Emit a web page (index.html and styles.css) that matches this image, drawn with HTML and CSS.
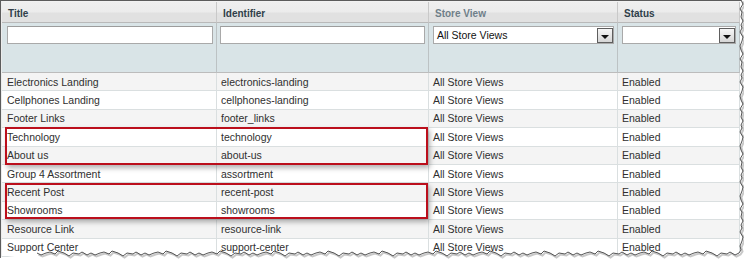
FILE: index.html
```html
<!DOCTYPE html>
<html>
<head>
<meta charset="utf-8">
<link rel="stylesheet" href="styles.css">
</head>
<body>
<div class="frame">
  <table class="grid">
    <colgroup>
      <col class="c1"><col class="c2"><col class="c3"><col class="c4">
    </colgroup>
    <thead>
      <tr class="headings">
        <th class="first"><span class="sort">Title</span></th>
        <th><span class="sort">Identifier</span></th>
        <th><span class="nosort">Store View</span></th>
        <th><span class="sort">Status</span></th>
      </tr>
      <tr class="filter">
        <th class="first"><input class="txt" type="text"></th>
        <th><input class="txt" type="text"></th>
        <th><div class="sel"><span class="val">All Store Views</span><span class="btn"><i></i></span></div></th>
        <th><div class="sel"><span class="val"></span><span class="btn"><i></i></span></div></th>
      </tr>
    </thead>
    <tbody>
      <tr class="odd"><td class="first">Electronics Landing</td><td>electronics-landing</td><td>All Store Views</td><td>Enabled</td></tr>
      <tr><td class="first">Cellphones Landing</td><td>cellphones-landing</td><td>All Store Views</td><td>Enabled</td></tr>
      <tr class="odd"><td class="first">Footer Links</td><td>footer_links</td><td>All Store Views</td><td>Enabled</td></tr>
      <tr><td class="first">Technology</td><td>technology</td><td>All Store Views</td><td>Enabled</td></tr>
      <tr class="odd"><td class="first">About us</td><td>about-us</td><td>All Store Views</td><td>Enabled</td></tr>
      <tr><td class="first">Group 4 Assortment</td><td>assortment</td><td>All Store Views</td><td>Enabled</td></tr>
      <tr class="odd"><td class="first">Recent Post</td><td>recent-post</td><td>All Store Views</td><td>Enabled</td></tr>
      <tr><td class="first">Showrooms</td><td>showrooms</td><td>All Store Views</td><td>Enabled</td></tr>
      <tr class="odd"><td class="first">Resource Link</td><td>resource-link</td><td>All Store Views</td><td>Enabled</td></tr>
      <tr><td class="first">Support Center</td><td>support-center</td><td>All Store Views</td><td>Enabled</td></tr>
    </tbody>
  </table>
  <div class="mark mark1"></div>
  <div class="mark mark2"></div>
</div>
<svg class="torn" width="744" height="262" viewBox="0 0 744 262">
  <path class="paper" d="M741 0 l2 4 -3 5 2 3 -1 5 2 4 -2 4 l1 3 -2 4 3 5 -1 4 -2 5 1 4 l2 4 -3 5 2 3 -1 5 2 4 -2 4 l1 3 -2 4 3 5 -1 4 -2 5 1 4 l2 4 -3 5 2 3 -1 5 2 4 -2 4 l1 3 -2 4 3 5 -1 4 -2 5 1 4 l2 4 -3 5 2 3 -1 5 2 4 -2 4 l1 3 -2 4 3 5 -1 4 -2 5 1 4 l2 4 -3 5 2 3 -1 5 2 4 -2 4 l1 3 -2 4 3 5 -1 4 -2 5 1 4 l-2 3 l-4 2 -5 -3 -3 2 -6 -1 -4 3 -5 -3 l-6 -2 -3 3 -5 -2 -4 1 -5 2 -4 -2 l-4 2 -5 -3 -3 2 -6 -1 -4 3 -5 -3 l-6 -2 -3 3 -5 -2 -4 1 -5 2 -4 -2 l-4 2 -5 -3 -3 2 -6 -1 -4 3 -5 -3 l-6 -2 -3 3 -5 -2 -4 1 -5 2 -4 -2 l-4 2 -5 -3 -3 2 -6 -1 -4 3 -5 -3 l-6 -2 -3 3 -5 -2 -4 1 -5 2 -4 -2 l-4 2 -5 -3 -3 2 -6 -1 -4 3 -5 -3 l-6 -2 -3 3 -5 -2 -4 1 -5 2 -4 -2 l-4 2 -5 -3 -3 2 -6 -1 -4 3 -5 -3 l-6 -2 -3 3 -5 -2 -4 1 -5 2 -4 -2 l-4 2 -5 -3 -3 2 -6 -1 -4 3 -5 -3 l-6 -2 -3 3 -5 -2 -4 1 -5 2 -4 -2 l-4 2 -5 -3 -3 2 -6 -1 -4 3 -5 -3 l-6 -2 -3 3 -5 -2 -4 1 -5 2 -4 -2 l-4 2 -5 -3 -3 2 -6 -1 -4 3 -5 -3 l-6 -2 -3 3 -5 -2 -4 1 -5 2 -4 -2 l-4 2 -5 -3 -3 2 -6 -1 -4 3 -5 -3 l-6 -2 -3 3 -5 -2 -4 1 -5 2 -4 -2 l-4 2 -5 -3 -3 2 -6 -1 -4 3 -5 -3 l-6 -2 -3 3 -5 -2 -4 1 -5 2 -4 -2 l-4 2 -5 -3 -3 2 -6 -1 -4 3 -5 -3 l-6 -2 -3 3 -5 -2 -4 1 -5 2 -4 -2 l-4 2 -5 -3 -3 2 -6 -1 -4 3 -5 -3 l-6 -2 -3 3 -5 -2 -4 1 -5 2 -4 -2 L-30 262 L744 262 L744 0 Z"/>
  <path class="edge-shadow" d="M741 0 l2 4 -3 5 2 3 -1 5 2 4 -2 4 l1 3 -2 4 3 5 -1 4 -2 5 1 4 l2 4 -3 5 2 3 -1 5 2 4 -2 4 l1 3 -2 4 3 5 -1 4 -2 5 1 4 l2 4 -3 5 2 3 -1 5 2 4 -2 4 l1 3 -2 4 3 5 -1 4 -2 5 1 4 l2 4 -3 5 2 3 -1 5 2 4 -2 4 l1 3 -2 4 3 5 -1 4 -2 5 1 4 l2 4 -3 5 2 3 -1 5 2 4 -2 4 l1 3 -2 4 3 5 -1 4 -2 5 1 4 l-2 3 l-4 2 -5 -3 -3 2 -6 -1 -4 3 -5 -3 l-6 -2 -3 3 -5 -2 -4 1 -5 2 -4 -2 l-4 2 -5 -3 -3 2 -6 -1 -4 3 -5 -3 l-6 -2 -3 3 -5 -2 -4 1 -5 2 -4 -2 l-4 2 -5 -3 -3 2 -6 -1 -4 3 -5 -3 l-6 -2 -3 3 -5 -2 -4 1 -5 2 -4 -2 l-4 2 -5 -3 -3 2 -6 -1 -4 3 -5 -3 l-6 -2 -3 3 -5 -2 -4 1 -5 2 -4 -2 l-4 2 -5 -3 -3 2 -6 -1 -4 3 -5 -3 l-6 -2 -3 3 -5 -2 -4 1 -5 2 -4 -2 l-4 2 -5 -3 -3 2 -6 -1 -4 3 -5 -3 l-6 -2 -3 3 -5 -2 -4 1 -5 2 -4 -2 l-4 2 -5 -3 -3 2 -6 -1 -4 3 -5 -3 l-6 -2 -3 3 -5 -2 -4 1 -5 2 -4 -2 l-4 2 -5 -3 -3 2 -6 -1 -4 3 -5 -3 l-6 -2 -3 3 -5 -2 -4 1 -5 2 -4 -2 l-4 2 -5 -3 -3 2 -6 -1 -4 3 -5 -3 l-6 -2 -3 3 -5 -2 -4 1 -5 2 -4 -2 l-4 2 -5 -3 -3 2 -6 -1 -4 3 -5 -3 l-6 -2 -3 3 -5 -2 -4 1 -5 2 -4 -2 l-4 2 -5 -3 -3 2 -6 -1 -4 3 -5 -3 l-6 -2 -3 3 -5 -2 -4 1 -5 2 -4 -2 l-4 2 -5 -3 -3 2 -6 -1 -4 3 -5 -3 l-6 -2 -3 3 -5 -2 -4 1 -5 2 -4 -2 l-4 2 -5 -3 -3 2 -6 -1 -4 3 -5 -3 l-6 -2 -3 3 -5 -2 -4 1 -5 2 -4 -2"/>
  <path class="edge" d="M741 0 l2 4 -3 5 2 3 -1 5 2 4 -2 4 l1 3 -2 4 3 5 -1 4 -2 5 1 4 l2 4 -3 5 2 3 -1 5 2 4 -2 4 l1 3 -2 4 3 5 -1 4 -2 5 1 4 l2 4 -3 5 2 3 -1 5 2 4 -2 4 l1 3 -2 4 3 5 -1 4 -2 5 1 4 l2 4 -3 5 2 3 -1 5 2 4 -2 4 l1 3 -2 4 3 5 -1 4 -2 5 1 4 l2 4 -3 5 2 3 -1 5 2 4 -2 4 l1 3 -2 4 3 5 -1 4 -2 5 1 4 l-2 3 l-4 2 -5 -3 -3 2 -6 -1 -4 3 -5 -3 l-6 -2 -3 3 -5 -2 -4 1 -5 2 -4 -2 l-4 2 -5 -3 -3 2 -6 -1 -4 3 -5 -3 l-6 -2 -3 3 -5 -2 -4 1 -5 2 -4 -2 l-4 2 -5 -3 -3 2 -6 -1 -4 3 -5 -3 l-6 -2 -3 3 -5 -2 -4 1 -5 2 -4 -2 l-4 2 -5 -3 -3 2 -6 -1 -4 3 -5 -3 l-6 -2 -3 3 -5 -2 -4 1 -5 2 -4 -2 l-4 2 -5 -3 -3 2 -6 -1 -4 3 -5 -3 l-6 -2 -3 3 -5 -2 -4 1 -5 2 -4 -2 l-4 2 -5 -3 -3 2 -6 -1 -4 3 -5 -3 l-6 -2 -3 3 -5 -2 -4 1 -5 2 -4 -2 l-4 2 -5 -3 -3 2 -6 -1 -4 3 -5 -3 l-6 -2 -3 3 -5 -2 -4 1 -5 2 -4 -2 l-4 2 -5 -3 -3 2 -6 -1 -4 3 -5 -3 l-6 -2 -3 3 -5 -2 -4 1 -5 2 -4 -2 l-4 2 -5 -3 -3 2 -6 -1 -4 3 -5 -3 l-6 -2 -3 3 -5 -2 -4 1 -5 2 -4 -2 l-4 2 -5 -3 -3 2 -6 -1 -4 3 -5 -3 l-6 -2 -3 3 -5 -2 -4 1 -5 2 -4 -2 l-4 2 -5 -3 -3 2 -6 -1 -4 3 -5 -3 l-6 -2 -3 3 -5 -2 -4 1 -5 2 -4 -2 l-4 2 -5 -3 -3 2 -6 -1 -4 3 -5 -3 l-6 -2 -3 3 -5 -2 -4 1 -5 2 -4 -2 l-4 2 -5 -3 -3 2 -6 -1 -4 3 -5 -3 l-6 -2 -3 3 -5 -2 -4 1 -5 2 -4 -2"/>
</svg>
</body>
</html>
```

FILE: styles.css
```css
html, body {
  margin: 0;
  padding: 0;
  overflow: hidden;
  background: #ffffff;
  width: 744px;
  height: 262px;
}

.frame {
  position: relative;
  border-top: 1px solid #5c5c5c;
  border-left: 1px solid #5c5c5c;
  width: 743px;
  height: 261px;
  overflow: hidden;
  font-family: "Liberation Sans", Arial, sans-serif;
}

.grid {
  border-collapse: separate;
  border-spacing: 0;
  table-layout: fixed;
  width: 739px;
  border-top: 1px solid #f2f2f2;
  border-left: 1px solid #ececec;
}

.grid col.c1 { width: 215px; }
.grid col.c2 { width: 212px; }
.grid col.c3 { width: 189px; }
.grid col.c4 { width: 122px; }

.grid th, .grid td {
  box-sizing: border-box;
  padding: 0 4px;
  text-align: left;
  white-space: nowrap;
  overflow: hidden;
}

.headings th {
  height: 21px;
  background: linear-gradient(#efefef 0, #ececec 10px, #e1e1e1 11px, #e1e1e1 100%);
  border-right: 1px solid #c9c9c9;
  border-bottom: 1px solid #b9b9b9;
  font-size: 10px;
  font-weight: bold;
  padding-left: 6px;
  padding-top: 2px;
  vertical-align: middle;
}
.headings .sort { color: #2f3f4a; }
.headings .nosort { color: #6f7f89; }

.filter th {
  height: 50px;
  background: #d9e4e7;
  border-right: 1px solid #bcc2c4;
  border-bottom: 1px solid #bcbcbc;
  vertical-align: top;
  padding-top: 3px;
  padding-left: 3px;
  padding-right: 3px;
}
.filter th.first { padding-left: 5px; }

.txt {
  display: block;
  box-sizing: border-box;
  width: 100%;
  height: 18px;
  margin: 0;
  border: 1px solid #a9a9a9;
  border-top-color: #9c9c9c;
  background: #ffffff;
  padding: 0 3px;
}

.sel {
  box-sizing: border-box;
  display: flex;
  align-items: center;
  justify-content: space-between;
  height: 18px;
  margin-left: 1px;
  border: 1px solid #a9a9a9;
  background: #ffffff;
  font-weight: normal;
  font-size: 10.5px;
  color: #111;
  padding-left: 3px;
}
.sel .btn {
  box-sizing: border-box;
  display: flex;
  align-items: center;
  justify-content: center;
  width: 16px;
  height: 15px;
  border: 1px solid #5e5e5e;
  background: linear-gradient(#f6f6f6, #d6d6d6);
}
.sel .btn i {
  display: block;
  width: 0;
  height: 0;
  margin-top: 3px;
  border-left: 4px solid transparent;
  border-right: 4px solid transparent;
  border-top: 4px solid #111;
}

tbody td {
  height: 18.4px;
  font-size: 10.5px;
  color: #2f2f2f;
  border-right: 1px solid #dadfe0;
  border-bottom: 1px solid #dadfe0;
  background: #ffffff;
  padding-left: 4px;
  vertical-align: middle;
}
tbody td.first { padding-left: 5px; }
tbody tr.odd td { background: #f4f4f4; }

.mark {
  position: absolute;
  left: 4px;
  width: 423px;
  box-sizing: border-box;
  border: 2px solid #bb0f1c;
  box-shadow: 2px 3px 5px rgba(0, 0, 0, 0.3);
}
.mark1 { top: 126px; height: 38px; }
.mark2 { top: 182px; height: 36px; }

.torn {
  position: absolute;
  left: 0;
  top: 0;
  pointer-events: none;
}
.torn .paper { fill: #ffffff; }
.torn .edge-shadow {
  fill: none;
  stroke: #9a9a9a;
  stroke-width: 2;
  opacity: 0.55;
  transform: translate(1.5px, 1.5px);
}
.torn .edge {
  fill: none;
  stroke: #555555;
  stroke-width: 1;
}
```
